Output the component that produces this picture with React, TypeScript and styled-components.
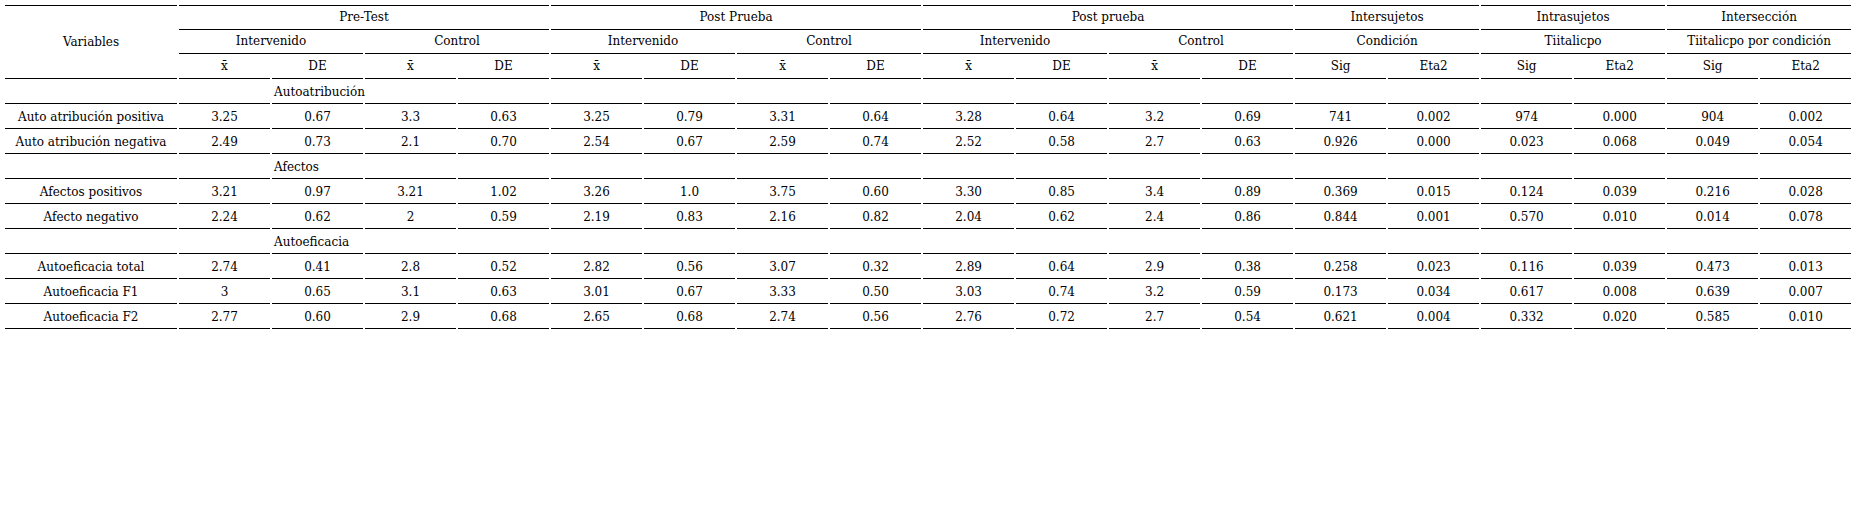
import React from 'react';
import styled, { createGlobalStyle } from 'styled-components';

const GlobalStyle = createGlobalStyle`
  body {
    margin: 0;
    background: #ffffff;
  }
`;

const Table = styled.table`
  margin: 5px 0 0 3px;
  width: 1850px;
  table-layout: fixed;
  border-collapse: separate;
  border-spacing: 2px 0;
  font-family: 'DejaVu Serif', serif;
  font-size: 12px;
  color: #000;
`;

const Col = styled.col<{ $w: number }>`
  width: ${p => p.$w}px;
`;

const HeadCell = styled.th<{ $top?: boolean; $lh?: number }>`
  font-weight: normal;
  text-align: center;
  padding: 0;
  line-height: ${p => p.$lh ?? 23}px;
  border-bottom: 1px solid #000;
  border-top: ${p => (p.$top ? '1px solid #000' : 'none')};
  white-space: nowrap;
`;

const Cell = styled.td`
  text-align: center;
  padding: 2px 0 0;
  line-height: 22px;
  border-bottom: 1px solid #000;
  white-space: nowrap;
`;

const SectionLabel = styled(Cell)`
  text-align: left;
  padding-left: 2px;
  overflow: visible;
`;

type Row = { label: string; values: string[] };
type Section = { title: string; rows: Row[] };

const sections: Section[] = [
  {
    title: 'Autoatribución',
    rows: [
      { label: 'Auto atribución positiva', values: ['3.25', '0.67', '3.3', '0.63', '3.25', '0.79', '3.31', '0.64', '3.28', '0.64', '3.2', '0.69', '741', '0.002', '974', '0.000', '904', '0.002'] },
      { label: 'Auto atribución negativa', values: ['2.49', '0.73', '2.1', '0.70', '2.54', '0.67', '2.59', '0.74', '2.52', '0.58', '2.7', '0.63', '0.926', '0.000', '0.023', '0.068', '0.049', '0.054'] },
    ],
  },
  {
    title: 'Afectos',
    rows: [
      { label: 'Afectos positivos', values: ['3.21', '0.97', '3.21', '1.02', '3.26', '1.0', '3.75', '0.60', '3.30', '0.85', '3.4', '0.89', '0.369', '0.015', '0.124', '0.039', '0.216', '0.028'] },
      { label: 'Afecto negativo', values: ['2.24', '0.62', '2', '0.59', '2.19', '0.83', '2.16', '0.82', '2.04', '0.62', '2.4', '0.86', '0.844', '0.001', '0.570', '0.010', '0.014', '0.078'] },
    ],
  },
  {
    title: 'Autoeficacia',
    rows: [
      { label: 'Autoeficacia total', values: ['2.74', '0.41', '2.8', '0.52', '2.82', '0.56', '3.07', '0.32', '2.89', '0.64', '2.9', '0.38', '0.258', '0.023', '0.116', '0.039', '0.473', '0.013'] },
      { label: 'Autoeficacia F1', values: ['3', '0.65', '3.1', '0.63', '3.01', '0.67', '3.33', '0.50', '3.03', '0.74', '3.2', '0.59', '0.173', '0.034', '0.617', '0.008', '0.639', '0.007'] },
      { label: 'Autoeficacia F2', values: ['2.77', '0.60', '2.9', '0.68', '2.65', '0.68', '2.74', '0.56', '2.76', '0.72', '2.7', '0.54', '0.621', '0.004', '0.332', '0.020', '0.585', '0.010'] },
    ],
  },
];

const groups = ['Pre-Test', 'Post Prueba', 'Post prueba'];
const tests = [
  { name: 'Intersujetos', sub: 'Condición' },
  { name: 'Intrasujetos', sub: 'Tiitalicpo' },
  { name: 'Intersección', sub: 'Tiitalicpo por condición' },
];
const XBAR = 'x\u0304';

export default function App() {
  return (
    <>
      <GlobalStyle />
      <Table>
        <colgroup>
          <Col $w={172} />
          {Array.from({ length: 18 }).map((_, i) => (
            <Col key={i} $w={91} />
          ))}
        </colgroup>
        <thead>
          <tr>
            <HeadCell $top rowSpan={3}>Variables</HeadCell>
            {groups.map(g => (
              <HeadCell $top key={g} colSpan={4}>{g}</HeadCell>
            ))}
            {tests.map(t => (
              <HeadCell $top key={t.name} colSpan={2}>{t.name}</HeadCell>
            ))}
          </tr>
          <tr>
            {groups.map(g => (
              <React.Fragment key={g}>
                <HeadCell colSpan={2}>Intervenido</HeadCell>
                <HeadCell colSpan={2}>Control</HeadCell>
              </React.Fragment>
            ))}
            {tests.map(t => (
              <HeadCell key={t.name} colSpan={2}>{t.sub}</HeadCell>
            ))}
          </tr>
          <tr>
            {Array.from({ length: 6 }).map((_, i) => (
              <React.Fragment key={i}>
                <HeadCell $lh={24}>{XBAR}</HeadCell>
                <HeadCell $lh={24}>DE</HeadCell>
              </React.Fragment>
            ))}
            {tests.map(t => (
              <React.Fragment key={t.name}>
                <HeadCell $lh={24}>Sig</HeadCell>
                <HeadCell $lh={24}>Eta2</HeadCell>
              </React.Fragment>
            ))}
          </tr>
        </thead>
        <tbody>
          {sections.map(s => (
            <React.Fragment key={s.title}>
              <tr>
                <Cell />
                <Cell />
                <SectionLabel>{s.title}</SectionLabel>
                {Array.from({ length: 16 }).map((_, i) => (
                  <Cell key={i} />
                ))}
              </tr>
              {s.rows.map(r => (
                <tr key={r.label}>
                  <Cell>{r.label}</Cell>
                  {r.values.map((v, i) => (
                    <Cell key={i}>{v}</Cell>
                  ))}
                </tr>
              ))}
            </React.Fragment>
          ))}
        </tbody>
      </Table>
    </>
  );
}
